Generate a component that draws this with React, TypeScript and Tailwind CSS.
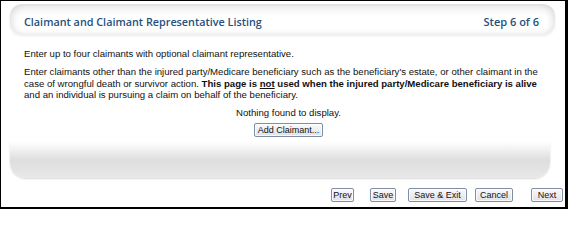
import React from "react";

const navButtons = [
  { label: "Prev", className: "w-[23px]" },
  { label: "Save", className: "w-[26px] ml-[16px]" },
  { label: "Save & Exit", className: "w-[59px] ml-[12px]" },
  { label: "Cancel", className: "w-[38px] ml-[8px]" },
  { label: "Next", className: "w-[32px] ml-[18px]" },
];

function ClassicButton({ label, className = "" }: { label: string; className?: string }) {
  return (
    <button
      className={`h-[14px] px-[3px] flex items-center justify-center border border-[#7f8ea3] rounded-[2px] bg-gradient-to-b from-[#fbfbfd] to-[#dde1e9] text-[9px] leading-[12px] text-[#111] whitespace-nowrap shadow-[inset_0_0_0_1px_rgba(255,255,255,0.8)] ${className}`}
    >
      {label}
    </button>
  );
}

export default function App() {
  return (
    <div
      className="w-[568px] h-[209px] bg-white border-black border-l border-t border-r-[3px] border-b-2 flex flex-col overflow-hidden"
      style={{ fontFamily: '"Liberation Sans", Arial, sans-serif' }}
    >
      <div className="ml-[9px] mr-[10px] mt-[3px] flex flex-col">
        {/* Header */}
        <div className="h-[30px] rounded-[12px] bg-white shadow-[inset_0_5px_8px_rgba(0,0,0,0.09),inset_4px_0_6px_rgba(0,0,0,0.05),inset_-4px_0_6px_rgba(0,0,0,0.05),0_2px_3px_rgba(0,0,0,0.08)] flex items-center justify-between pl-[14px] pr-[16px] pt-[6px]">
          <span
            className="text-[10.8px] font-semibold text-[#24507e]"
            style={{ fontFamily: '"Open Sans", "Noto Sans", sans-serif' }}
          >
            Claimant and Claimant Representative Listing
          </span>
          <span
            className="text-[11px] font-semibold text-[#24507e]"
            style={{ fontFamily: '"Open Sans", "Noto Sans", sans-serif' }}
          >
            Step 6 of 6
          </span>
        </div>

        {/* Body */}
        <div className="pl-[14px] pr-[8px] pt-[14px] text-[9.6px] leading-[11.4px] text-[#111]">
          <p>Enter up to four claimants with optional claimant representative.</p>
          <p className="mt-[7px]">
            Enter claimants other than the injured party/Medicare beneficiary such as the beneficiary's estate, or other
            claimant in the case of wrongful death or survivor action.{" "}
            <b>
              This page is <u>not</u> used when the injured party/Medicare beneficiary is alive
            </b>{" "}
            and an individual is pursuing a claim on behalf of the beneficiary.
          </p>
          <p className="mt-[6px] pl-[6px] text-center">Nothing found to display.</p>
          <div className="mt-[5px] pl-[6px] flex justify-center">
            <ClassicButton label="Add Claimant..." />
          </div>
        </div>

        {/* Footer tray */}
        <div className="mt-[5px] mr-[5px] h-[36px] rounded-b-[16px] bg-gradient-to-b from-white via-[#dedede] to-[#e8e8e8] shadow-[0_1px_2px_rgba(0,0,0,0.15)]" />
      </div>

      {/* Navigation */}
      <div className="mt-[10px] flex justify-end pr-[2px]">
        {navButtons.map((b) => (
          <ClassicButton key={b.label} label={b.label} className={b.className} />
        ))}
      </div>
    </div>
  );
}
